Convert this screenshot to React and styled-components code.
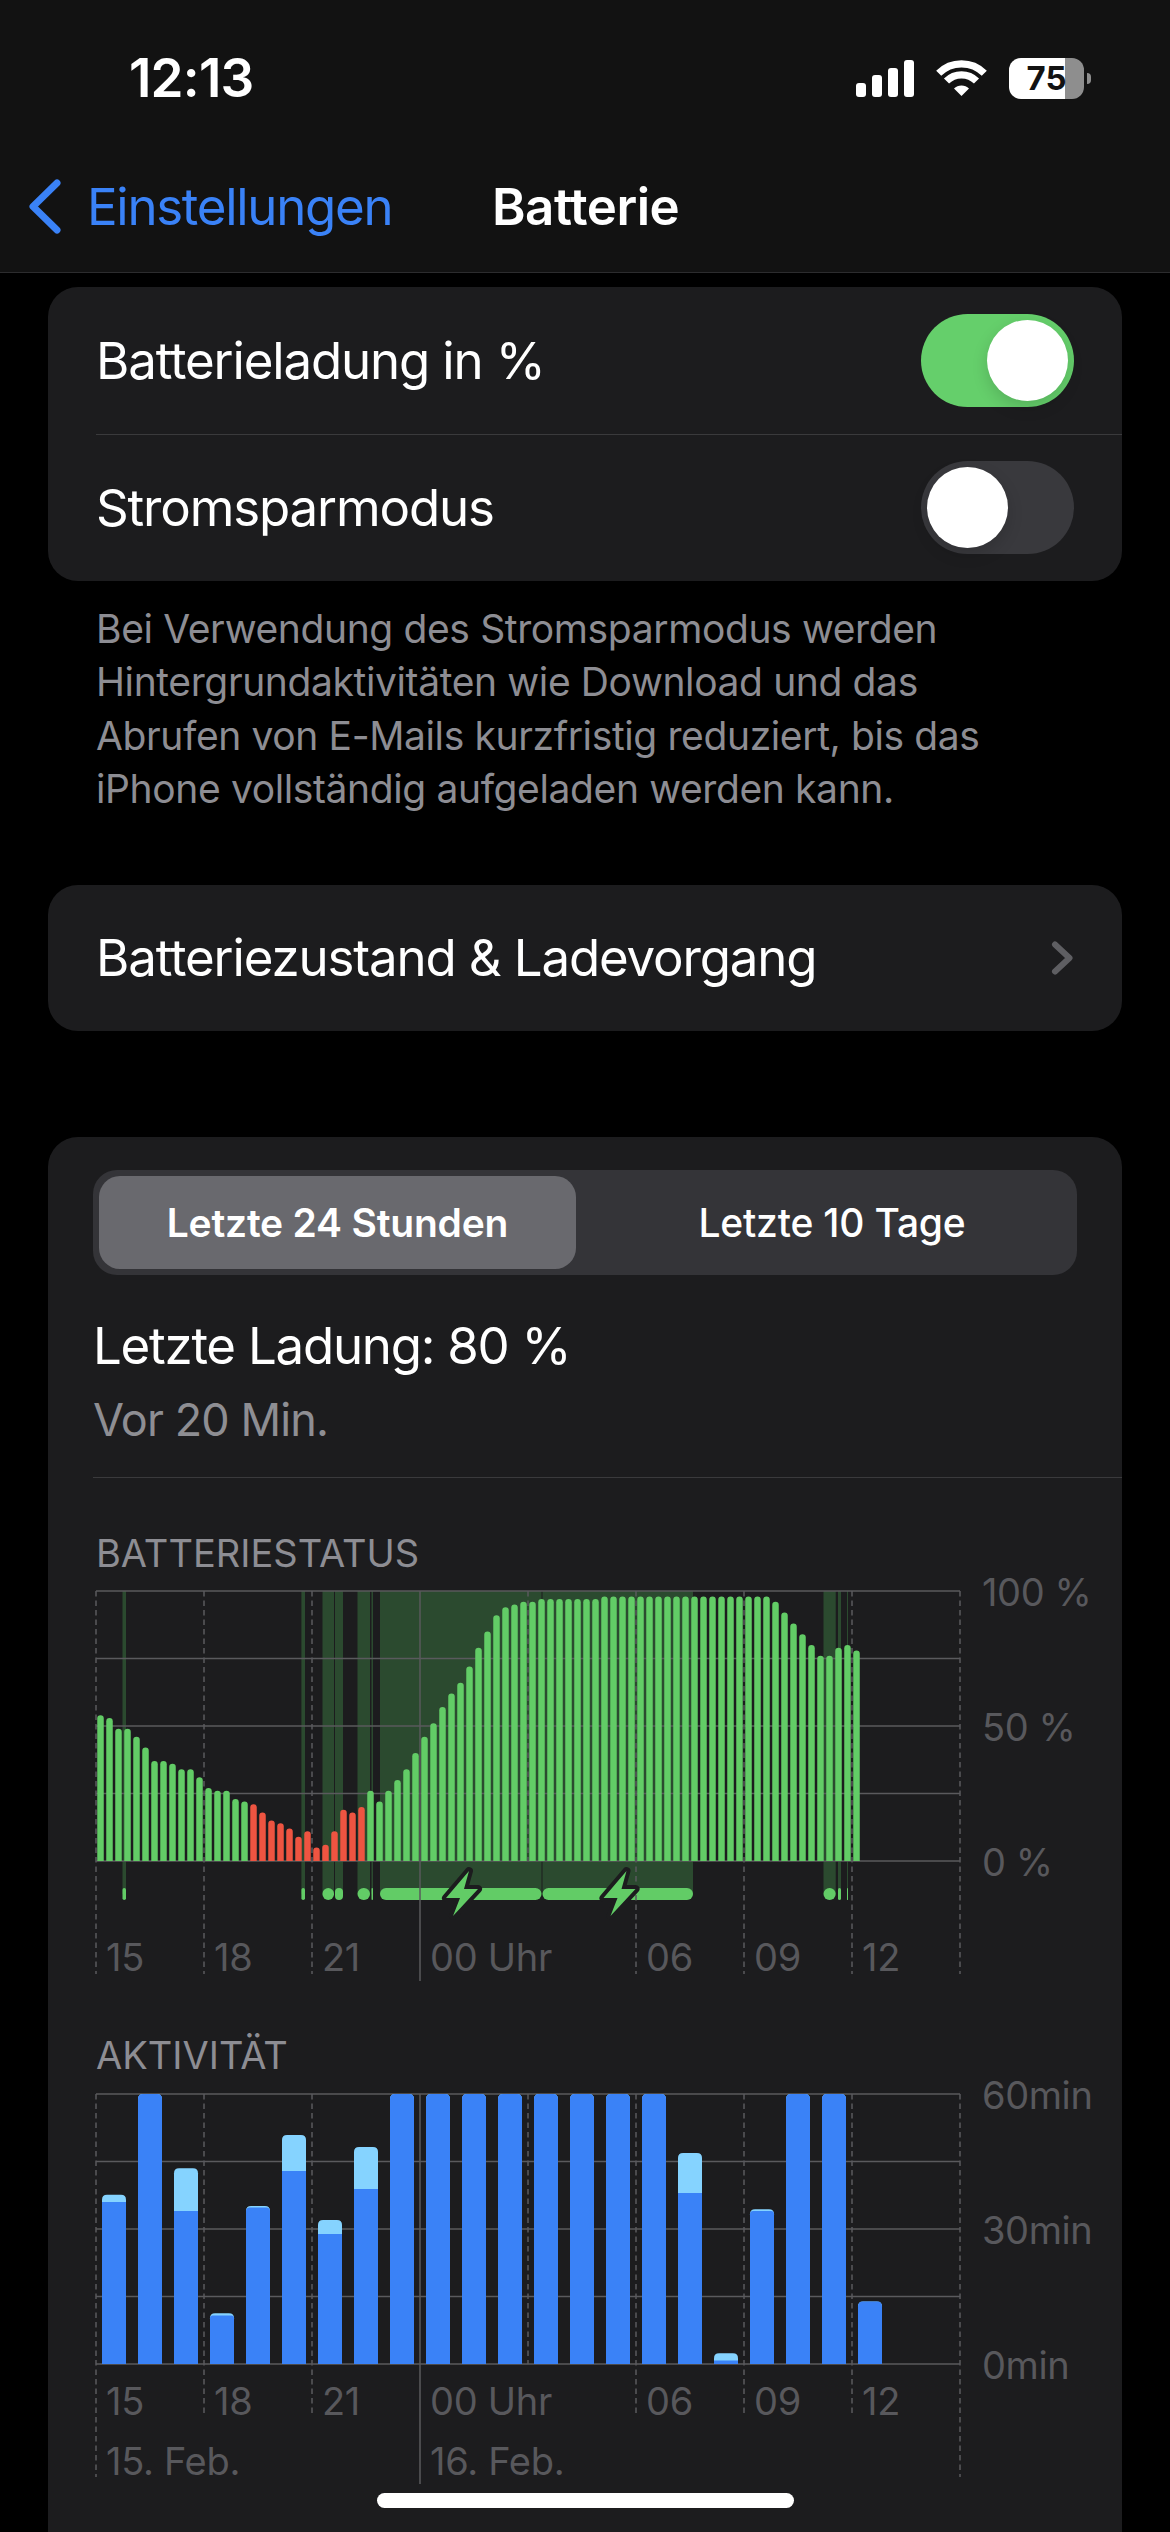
import styled, { createGlobalStyle } from "styled-components";

const FONT = `Inter, "Liberation Sans", sans-serif`;

const GlobalStyle = createGlobalStyle`
  html, body {
    margin: 0;
    background: #000;
    font-family: ${FONT};
  }
`;

// battery percent per 15 minutes
const LEVELS = [
  54, 53, 49, 49, 46, 42, 37, 37, 36, 34, 34, 31, 27, 26, 26, 23, 22, 21, 18, 15, 14, 12, 9, 11, 5,
  6, 11, 19, 18, 20, 26, 22, 26, 30, 34, 40, 46, 51, 57, 62, 66, 72, 79, 85, 91, 94, 95, 96, 96,
  97, 97, 97, 97, 97, 97, 97, 98, 98, 98, 98, 98, 98, 98, 98, 98, 98, 98, 98, 98, 98, 98, 98, 98,
  98, 98, 96, 92, 88, 84, 80, 76, 76, 79, 80, 78,
];

// [x, width] of the charging stretches
const CHARGING = [
  [26.5, 3.5], [205.4, 3.6], [226.5, 11.5], [239, 8], [261.5, 12.5], [275.5, 1.5],
  [284, 161.5], [446.5, 150.5], [727.5, 12.2], [742, 3], [751, 1],
];

// [screen on, screen off] as top of stack in minutes
const ACTIVITY = [
  [36, 37.6], [60, 60], [34, 43.5], [10.8, 11.3], [34.8, 35.1], [42.9, 50.9], [28.9, 32],
  [38.9, 48.2], [60, 60], [60, 60], [60, 60], [60, 60], [60, 60], [60, 60], [60, 60], [60, 60],
  [38, 46.9], [0.8, 2.4], [34, 34.4], [60, 60], [60, 60], [13.9, 13.9],
];

const PLOT_H = 270;
const GRID = "#5a5a5d";
const isRed = (i) => i >= 17 && i <= 29;

const topRounded = (x, y, w, h, r) => {
  const rr = Math.min(r, h);
  return `M${x} ${y + h}V${y + rr}Q${x} ${y} ${x + rr} ${y}H${x + w - rr}Q${x + w} ${y} ${x + w} ${y + rr}V${y + h}Z`;
};

const Gridlines = ({ dashEnd }) => (
  <g stroke={GRID} strokeWidth="1.5">
    {[0, 108, 216, 432, 540, 648, 756, 864].map((x) => (
      <line
        key={x}
        x1={x}
        x2={x}
        y1="0"
        y2={x === 432 ? PLOT_H : x === 0 || x === 864 ? 383 : dashEnd}
        strokeDasharray="5.5 4"
      />
    ))}
    <line x1="324" x2="324" y1="0" y2="390" />
  </g>
);

const HorizontalLines = () => (
  <g stroke={GRID} strokeWidth="1.5">
    {[0, 1, 2, 3, 4].map((i) => (
      <line key={i} x1="0" x2="864" y1={(i * PLOT_H) / 4} y2={(i * PLOT_H) / 4} />
    ))}
  </g>
);

const Bolt = ({ x }) => (
  <path
    transform={`translate(${x} 300)`}
    d="M9 -20L-14 7H0L-7 25L18 -2H4Z"
    fill="#62cc66"
    stroke="#1c1c1e"
    strokeWidth="8"
    strokeLinejoin="round"
    paintOrder="stroke"
  />
);

const BatteryDrawing = () => (
  <ChartSvg width="866" height="390" viewBox="0 0 866 390">
    {CHARGING.map(([x, w]) => (
      <rect key={x} x={x} y="0" width={w} height="303" fill="#2b4a2f" />
    ))}
    <HorizontalLines />
    {LEVELS.map((level, i) => {
      const h = (level / 100) * PLOT_H;
      return (
        <path
          key={i}
          d={topRounded(1.25 + i * 9, PLOT_H - h, 6.5, h, 3.25)}
          fill={isRed(i) ? "#ee5441" : "#62cc66"}
        />
      );
    })}
    {CHARGING.map(([x, w]) => (
      <rect key={x} x={x} y="297" width={w} height="12" rx={Math.min(w / 2, 6)} fill="#62cc66" />
    ))}
    <Gridlines dashEnd={383} />
    <Bolt x={364} />
    <Bolt x={521.5} />
  </ChartSvg>
);

const ActivityDrawing = () => (
  <ChartSvg width="866" height="390" viewBox="0 0 866 390">
    <HorizontalLines />
    {ACTIVITY.map(([dark, total], i) => {
      const x = 6 + i * 36;
      const toY = (min) => PLOT_H - (min / 60) * PLOT_H;
      const gap = toY(dark) - toY(total);
      return (
        <g key={i}>
          <path d={topRounded(x, toY(total), 24, PLOT_H - toY(total), 5)} fill="#85d3ff" />
          <path d={topRounded(x, toY(dark), 24, PLOT_H - toY(dark), Math.max(0, 5 - gap))} fill="#3a82f7" />
        </g>
      );
    })}
    <Gridlines dashEnd={323} />
  </ChartSvg>
);

const App = () => (
  <Page>
    <GlobalStyle />
    <TopBars>
      <StatusBar>
        <Clock>12:13</Clock>
        <StatusIcons>
          <SignalBars>
            {[14, 22, 29, 37].map((h) => (
              <Signal key={h} $h={h} />
            ))}
          </SignalBars>
          <svg width="51" height="37" viewBox="0 0 51 37">
            <g fill="none" stroke="#fff" strokeWidth="7.2">
              <path d="M2.7 13.2A32.3 32.3 0 0 1 48.3 13.2" />
              <path d="M10.5 21A21.2 21.2 0 0 1 40.5 21" />
            </g>
            <path d="M18 28.5A10.6 10.6 0 0 1 33 28.5L25.5 36Z" fill="#fff" />
          </svg>
          <Battery>
            <BatteryBody $level={75}>75</BatteryBody>
            <BatteryNub />
          </Battery>
        </StatusIcons>
      </StatusBar>
      <NavBar>
        <BackLink>
          <svg width="33" height="55" viewBox="0 0 33 55">
            <path
              d="M29 4L5 27.5L29 51"
              fill="none"
              stroke="#3a82f7"
              strokeWidth="7"
              strokeLinecap="round"
              strokeLinejoin="round"
            />
          </svg>
          Einstellungen
        </BackLink>
        <NavTitle>Batterie</NavTitle>
      </NavBar>
    </TopBars>

    <Content>
      <Card>
        <Row>
          Batterieladung in %
          <Toggle $on>
            <Knob />
          </Toggle>
        </Row>
        <RowDivider />
        <Row>
          Stromsparmodus
          <Toggle>
            <Knob />
          </Toggle>
        </Row>
      </Card>
      <Note>
        Bei Verwendung des Stromsparmodus werden
        <br />
        Hintergrundaktivitäten wie Download und das
        <br />
        Abrufen von E-Mails kurzfristig reduziert, bis das
        <br />
        iPhone vollständig aufgeladen werden kann.
      </Note>

      <LinkCard>
        <Row>
          Batteriezustand &amp; Ladevorgang
          <svg width="23" height="34" viewBox="0 0 23 34">
            <path
              d="M4 3.5L18.5 17L4 30.5"
              fill="none"
              stroke="#5e5e62"
              strokeWidth="6"
              strokeLinecap="round"
              strokeLinejoin="round"
            />
          </svg>
        </Row>
      </LinkCard>

      <UsageCard>
        <Segmented>
          <Segment $active>Letzte 24 Stunden</Segment>
          <Segment>Letzte 10 Tage</Segment>
        </Segmented>
        <LastCharge>Letzte Ladung: 80 %</LastCharge>
        <LastChargeTime>Vor 20 Min.</LastChargeTime>
        <UsageDivider />

        <ChartTitle>BATTERIESTATUS</ChartTitle>
        <ChartBody>
          <BatteryDrawing />
          <XAxis $top={344}>
            <XLabel>15</XLabel>
            <XLabel>18</XLabel>
            <XLabel>21</XLabel>
            <XLabel>00 Uhr</XLabel>
            <XLabel />
            <XLabel>06</XLabel>
            <XLabel>09</XLabel>
            <XLabel>12</XLabel>
          </XAxis>
          <YAxis>
            <span>100 %</span>
            <span>50 %</span>
            <span>0 %</span>
          </YAxis>
        </ChartBody>

        <ChartTitle $gap={54}>AKTIVITÄT</ChartTitle>
        <ChartBody>
          <ActivityDrawing />
          <XAxis $top={285}>
            <XLabel>15</XLabel>
            <XLabel>18</XLabel>
            <XLabel>21</XLabel>
            <XLabel>00 Uhr</XLabel>
            <XLabel />
            <XLabel>06</XLabel>
            <XLabel>09</XLabel>
            <XLabel>12</XLabel>
          </XAxis>
          <XAxis $top={345}>
            <XLabel>15. Feb.</XLabel>
            <XLabel />
            <XLabel />
            <XLabel>16. Feb.</XLabel>
          </XAxis>
          <YAxis>
            <span>60min</span>
            <span>30min</span>
            <span>0min</span>
          </YAxis>
        </ChartBody>
      </UsageCard>
    </Content>

    <HomeIndicator />
  </Page>
);

const Page = styled.div`
  position: relative;
  width: 1170px;
  height: 2532px;
  overflow: hidden;
  background: #000;
  color: #fff;
`;

const TopBars = styled.header`
  height: 273px;
  box-sizing: border-box;
  background: #121212;
  border-bottom: 1px solid #2c2c2e;
`;

const StatusBar = styled.div`
  height: 156px;
  display: flex;
  align-items: center;
  justify-content: space-between;
  padding: 0 79px 0 129px;
`;

const Clock = styled.span`
  font-size: 53px;
  font-weight: 600;
  letter-spacing: -0.8px;
`;

const StatusIcons = styled.div`
  display: flex;
  align-items: center;
  gap: 22px;
`;

const SignalBars = styled.div`
  display: flex;
  align-items: flex-end;
  gap: 6px;
  height: 37px;
`;

const Signal = styled.i`
  display: block;
  width: 10px;
  height: ${(p) => p.$h}px;
  border-radius: 3px;
  background: #fff;
`;

const Battery = styled.div`
  display: flex;
  align-items: center;
  gap: 3px;
`;

const BatteryBody = styled.div`
  width: 75px;
  height: 41px;
  border-radius: 12px;
  background: linear-gradient(to right, #fff ${(p) => p.$level}%, #8e8e8e ${(p) => p.$level}%);
  color: #121212;
  font-size: 33px;
  font-weight: 700;
  line-height: 41px;
  text-align: center;
`;

const BatteryNub = styled.i`
  display: block;
  width: 4px;
  height: 11px;
  border-radius: 0 4px 4px 0;
  background: #8e8e8e;
`;

const NavBar = styled.nav`
  height: 100px;
  display: flex;
  align-items: center;
  padding-left: 28px;
`;

const BackLink = styled.span`
  display: flex;
  align-items: center;
  gap: 26px;
  width: 464px;
  color: #3a82f7;
  font-size: 51px;
  letter-spacing: -1.3px;
`;

const NavTitle = styled.span`
  font-size: 51px;
  font-weight: 600;
  letter-spacing: -0.5px;
`;

const Content = styled.main`
  padding: 14px 48px 0;
`;

const Card = styled.section`
  border-radius: 30px;
  background: #1c1c1e;
  overflow: hidden;
`;

const LinkCard = styled(Card)`
  margin-top: 69px;
`;

const UsageCard = styled(Card)`
  margin-top: 106px;
  padding: 33px 0 120px 45px;
`;

const Row = styled.div`
  height: 146.5px;
  display: flex;
  align-items: center;
  justify-content: space-between;
  padding: 0 48px;
  font-size: 51px;
  letter-spacing: -1.15px;
`;

const RowDivider = styled.div`
  height: 1px;
  margin-left: 48px;
  background: #3a3a3c;
`;

const Toggle = styled.div`
  width: 153px;
  height: 93px;
  box-sizing: border-box;
  display: flex;
  align-items: center;
  justify-content: ${(p) => (p.$on ? "flex-end" : "flex-start")};
  padding: 0 6px;
  border-radius: 47px;
  background: ${(p) => (p.$on ? "#65cf6b" : "#39393d")};
`;

const Knob = styled.i`
  display: block;
  width: 81px;
  height: 81px;
  border-radius: 50%;
  background: #fff;
  box-shadow: 0 6px 16px rgba(0, 0, 0, 0.15);
`;

const Note = styled.p`
  margin: 21px 48px 0;
  color: #8d8d93;
  font-size: 39px;
  line-height: 53.4px;
  letter-spacing: -0.38px;
`;

const Segmented = styled.div`
  width: 984px;
  height: 105px;
  box-sizing: border-box;
  display: grid;
  grid-template-columns: 477px 1fr;
  padding: 6px 0 6px 6px;
  border-radius: 24px;
  background: #343438;
`;

const Segment = styled.div`
  display: flex;
  align-items: center;
  justify-content: center;
  padding-left: ${(p) => (p.$active ? 0 : 11)}px;
  border-radius: 21px;
  background: ${(p) => (p.$active ? "#69696e" : "transparent")};
  font-size: 39px;
  font-weight: ${(p) => (p.$active ? 600 : 500)};
  letter-spacing: -0.2px;
`;

const LastCharge = styled.div`
  margin-top: 41px;
  font-size: 51px;
  line-height: 60px;
  letter-spacing: -1.25px;
`;

const LastChargeTime = styled.div`
  margin-top: 14px;
  color: #8e8e93;
  font-size: 45px;
  line-height: 60px;
  letter-spacing: -0.9px;
`;

const UsageDivider = styled.div`
  height: 1px;
  margin-top: 27px;
  background: #3a3a3c;
`;

const ChartTitle = styled.h2`
  margin: ${(p) => p.$gap ?? 55}px 0 ${(p) => (p.$gap ? 19 : 18)}px 3px;
  color: #8d8d93;
  font-size: 38px;
  font-weight: 400;
  line-height: 40px;
`;

const ChartBody = styled.div`
  display: grid;
  grid-template-columns: 864px auto;
  justify-content: start;
  height: 390px;
  margin-left: 3px;
`;

const ChartSvg = styled.svg`
  grid-area: 1 / 1;
  display: block;
  overflow: visible;
`;

const XAxis = styled.div`
  grid-area: 1 / 1;
  display: grid;
  grid-template-columns: repeat(8, 108px);
  align-self: start;
  margin-top: ${(p) => p.$top}px;
`;

const XLabel = styled.span`
  padding-left: 10px;
  color: #58585c;
  font-size: 38px;
  line-height: 44px;
  letter-spacing: -0.3px;
  white-space: nowrap;
`;

const YAxis = styled.div`
  grid-area: 1 / 2;
  display: flex;
  flex-direction: column;
  justify-content: space-between;
  align-self: start;
  height: 314px;
  margin: -21px 0 0 22px;
  color: #58585c;
  font-size: 38px;
  line-height: 44px;
  letter-spacing: -0.4px;
  white-space: nowrap;
`;

const HomeIndicator = styled.div`
  position: absolute;
  left: 377px;
  bottom: 24px;
  width: 417px;
  height: 15px;
  border-radius: 8px;
  background: #fff;
`;

export default App;
